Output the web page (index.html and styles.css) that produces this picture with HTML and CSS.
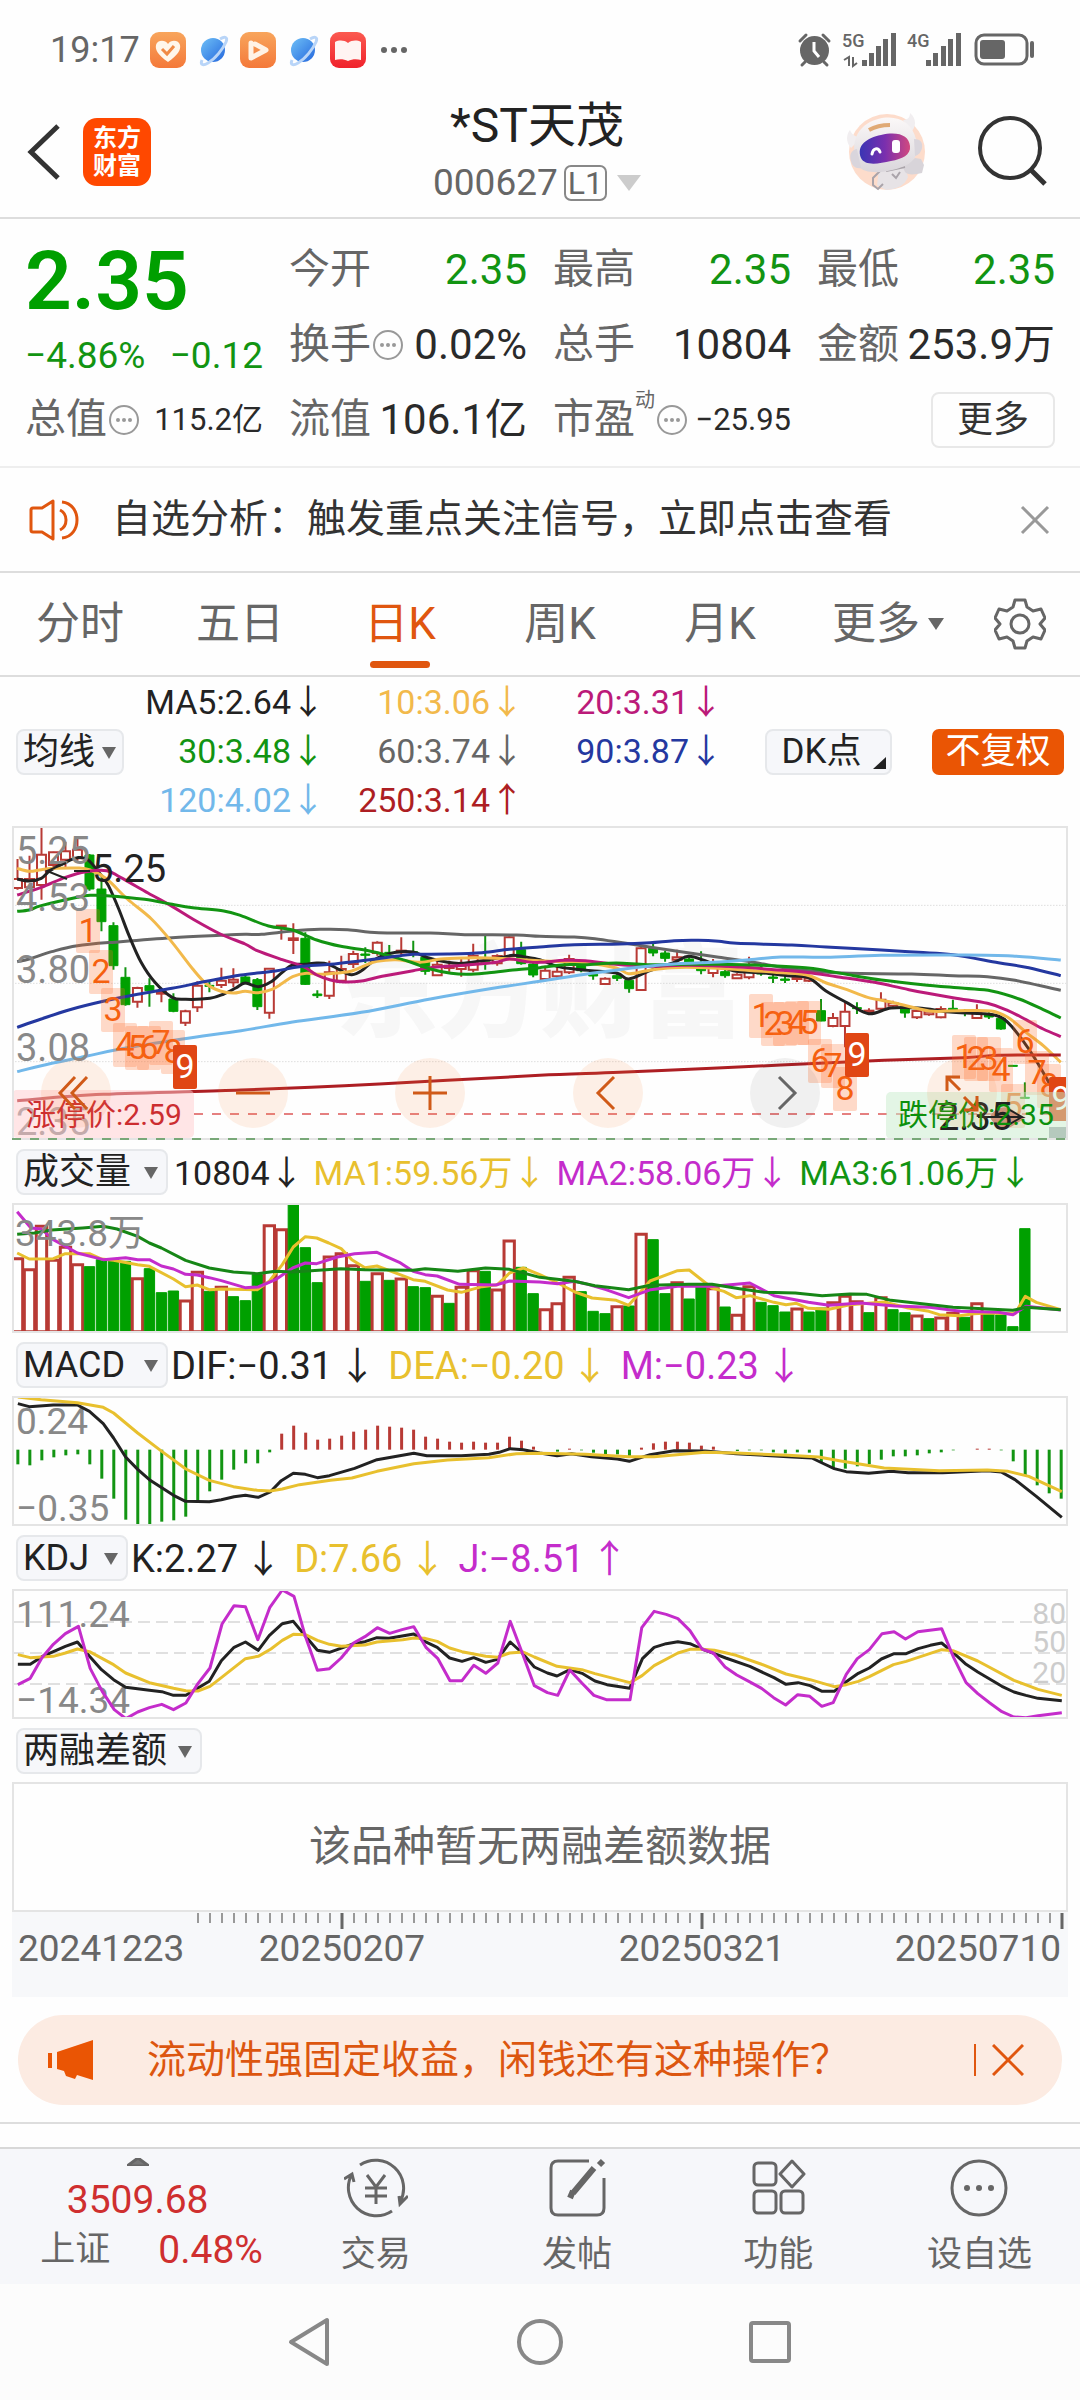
FILE: index.html
```html
<!DOCTYPE html>
<html lang="zh-CN">
<head>
<meta charset="utf-8">
<meta name="viewport" content="width=device-width, initial-scale=1">
<title>*ST天茂 000627</title>
<link rel="stylesheet" href="styles.css">
</head>
<body>
<div class="status">
  <span class="status-time">19:17</span>
  <svg class="status-apps" width="260" height="36" viewBox="0 0 260 36" aria-hidden="true">
    <defs>
      <linearGradient id="orange" x1="0" y1="0" x2="0" y2="1"><stop offset="0" stop-color="#f8a55c"/><stop offset="1" stop-color="#f4793a"/></linearGradient>
      <linearGradient id="blue" x1="0" y1="0" x2="1" y2="1"><stop offset="0" stop-color="#6fc0f7"/><stop offset="1" stop-color="#2467dd"/></linearGradient>
      <linearGradient id="red" x1="0" y1="0" x2="0" y2="1"><stop offset="0" stop-color="#fb5a50"/><stop offset="1" stop-color="#f0222c"/></linearGradient>
      <g id="planet"><circle cx="13" cy="18" r="12" fill="url(#blue)"/><path d="M20 7c5-3 8-2 6 3-3 7-11 17-18 21-5 3-8 2-6-3" fill="none" stroke="#b9d5f8" stroke-width="3"/></g>
    </defs>
    <rect width="36" height="36" rx="9" fill="url(#orange)"/>
    <path d="M18 30C8 23 5 18 6 13c1-5 9-6 12-1 3-5 11-4 12 1 1 5-2 10-12 17z" fill="#fff6ea"/>
    <path d="M12 17l5 5 7-8" fill="none" stroke="#f08a45" stroke-width="3"/>
    <use href="#planet" x="50"/>
    <rect x="90" width="36" height="36" rx="9" fill="url(#orange)"/>
    <path d="M101 11v15l15-8-11-6" fill="none" stroke="#fff3e6" stroke-width="5" stroke-linejoin="round" stroke-linecap="round"/>
    <use href="#planet" x="140"/>
    <rect x="180" width="36" height="36" rx="9" fill="url(#red)"/>
    <path d="M185 10c4-2 9-2 13 1 4-3 9-3 13-1v18c-4-1-9-1-13 1-4-2-9-2-13-1z" fill="#fff4f2"/>
    <g fill="#666"><circle cx="234" cy="18" r="3"/><circle cx="244" cy="18" r="3"/><circle cx="254" cy="18" r="3"/></g>
  </svg>
  <svg class="status-system" width="240" height="36" viewBox="0 0 240 36" aria-hidden="true">
    <g fill="none" stroke="#666" stroke-width="3" stroke-linecap="round"><path d="M2 9l6-6M25 3l6 6M7 30l-3 3M26 30l3 3"/></g>
    <circle cx="16.500" cy="18.500" r="14.500" fill="#666"/><path d="M16 10v9l5 6" fill="none" stroke="#fff" stroke-width="3"/>
    <text x="44" y="15" class="net">5G</text><text x="109" y="15" class="net">4G</text>
    <path d="M46 28l5-3v9M55 25v9l4-3" fill="none" stroke="#666" stroke-width="2"/>
    <g fill="#666">
      <path d="M64 28h5v6h-5zM71 21h5v13h-5zM78 14h5v20h-5zM85 7h5v27h-5zM93 1h5v33h-5z"/>
      <path d="M128 28h5v6h-5zM135 21h5v13h-5zM143 14h5v20h-5zM150 7h5v27h-5zM158 1h5v33h-5z"/>
      <rect x="182" y="8" width="25" height="19" rx="3"/><rect x="232" y="9" width="4" height="17" rx="2"/>
    </g>
    <rect x="178" y="3" width="51" height="29" rx="8" fill="none" stroke="#666" stroke-width="3"/>
  </svg>
</div>

<header class="header">
  <div class="header-side">
    <button class="icon-btn" aria-label="返回"><svg width="36" height="58" viewBox="0 0 36 58"><path d="M32 3L5 29l27 26" fill="none" stroke="#333" stroke-width="5"/></svg></button>
    <a class="logo" href="#home"><span>东方</span><span>财富</span></a>
  </div>
  <div class="header-title">
    <h1>*ST天茂</h1>
    <p>000627<span class="level">L1</span><svg width="24" height="16" viewBox="0 0 24 16" aria-hidden="true"><path d="M0 0h24L12 16z" fill="#ccc"/></svg></p>
  </div>
  <div class="header-side header-right">
    <button class="icon-btn" aria-label="智能助手">
      <svg width="80" height="80" viewBox="0 0 80 80">
        <defs>
          <linearGradient id="visor"><stop offset="0" stop-color="#3a35b4"/><stop offset=".5" stop-color="#7a2fae"/><stop offset="1" stop-color="#d2497f"/></linearGradient>
          <linearGradient id="shell" x1="0" y1="0" x2="0" y2="1"><stop offset="0" stop-color="#fbf8f8"/><stop offset="1" stop-color="#dad6db"/></linearGradient>
        </defs>
        <circle cx="41" cy="40" r="38" fill="#fddccb"/>
        <path d="M5 36C-2 28 2 20 4 18c2 5 6 7 11 8zM57 8c4 0 7-2 7-7 7 6 6 14 1 19z" fill="#f1eef0"/>
        <path d="M33 57l25-5 4 13c-3 8-10 12-22 13l-9-5z" fill="#e7e3e6"/>
        <path d="M56 53c8 0 9-5 13-7l6 1 3 6-2 8c-8 2-15 2-17-1z" fill="#d8d4d9"/>
        <path d="M35 58l-8 8v7l5 4 5-5M40 59l19-4M46 62l4 4 4-6" fill="none" stroke="#aaa4aa" stroke-width="2"/>
        <path d="M12 54C3 32 10 13 32 7c20-5 34 4 38 20 4 15-2 24-14 28-12 5-36 9-44-1z" fill="url(#shell)"/>
        <path d="M11 37c-6 1-8 6-6 12 1 5 5 8 10 7zM68 27c6 0 9 3 8 9-1 4-3 7-7 8z" fill="#d9d5dc"/>
        <path d="M23 18c7-4 13-5 21-5" fill="none" stroke="#e0aa76" stroke-width="4"/>
        <path d="M15 46c-5-13 6-20 20-23 18-4 28 1 29 11 1 9-8 13-19 15-13 3-26 5-30-3z" fill="url(#visor)"/>
        <path d="M26 42c1-6 6-7 8-2" fill="none" stroke="#fff" stroke-width="3" stroke-linecap="round"/>
        <rect x="46" y="28" width="8" height="13" rx="3" fill="#fff"/>
      </svg>
    </button>
    <button class="icon-btn" aria-label="搜索"><svg width="72" height="72" viewBox="0 0 72 72"><circle cx="34" cy="32" r="30" fill="none" stroke="#333" stroke-width="4"/><path d="M54 53l15 15" stroke="#333" stroke-width="5"/></svg></button>
  </div>
</header>

<section class="quote">
  <div class="quote-col">
    <div class="price">2.35</div>
    <div class="change"><span>−4.86%</span><span>−0.12</span></div>
    <div class="field"><span class="name">总值</span><svg class="more-dot"><use href="#dots"/></svg><span class="val small">115.2亿</span></div>
  </div>
  <div class="quote-col">
    <div class="field"><span class="name">今开</span><span class="val down">2.35</span></div>
    <div class="field"><span class="name">换手</span><svg class="more-dot"><use href="#dots"/></svg><span class="val">0.02%</span></div>
    <div class="field"><span class="name">流值</span><span class="val">106.1亿</span></div>
  </div>
  <div class="quote-col">
    <div class="field"><span class="name">最高</span><span class="val down">2.35</span></div>
    <div class="field"><span class="name">总手</span><span class="val">10804</span></div>
    <div class="field"><span class="name">市盈</span><span class="sup">动</span><svg class="more-dot"><use href="#dots"/></svg><span class="val small">−25.95</span></div>
  </div>
  <div class="quote-col">
    <div class="field"><span class="name">最低</span><span class="val down">2.35</span></div>
    <div class="field"><span class="name">金额</span><span class="val">253.9万</span></div>
    <div class="field"><button class="more-btn">更多</button></div>
  </div>
  <svg class="symbols" aria-hidden="true"><symbol id="dots" viewBox="0 0 30 30"><circle cx="15" cy="15" r="14" fill="none" stroke="#999" stroke-width="2"/><g fill="#999"><circle cx="9" cy="15" r="2"/><circle cx="15" cy="15" r="2"/><circle cx="21" cy="15" r="2"/></g></symbol></svg>
</section>

<section class="notice">
  <svg width="52" height="42" viewBox="0 0 52 42" aria-hidden="true"><g fill="none" stroke="#e0560f" stroke-width="3" stroke-linejoin="round"><path d="M2 11q0-2 2-2h9L24 2v38L13 33H4q-2 0-2-2z"/><path d="M31 11c8 4 8 16 0 20M33 3c20 2 20 34 0 36"/></g></svg>
  <a href="#signal">自选分析：触发重点关注信号，立即点击查看</a>
  <button class="icon-btn" aria-label="关闭"><svg width="30" height="30" viewBox="0 0 30 30"><path d="M2 2l26 26M28 2L2 28" stroke="#999" stroke-width="3"/></svg></button>
</section>

<nav class="tabs">
  <button>分时</button><button>五日</button><button class="active">日K</button><button>周K</button><button>月K</button>
  <button class="tab-more">更多<svg width="16" height="12" viewBox="0 0 16 12" aria-hidden="true"><path d="M0 0h16L8 12z" fill="#666"/></svg></button>
  <button aria-label="设置"><svg width="52" height="52" viewBox="0 0 52 52"><g fill="none" stroke="#666" stroke-width="3" stroke-linejoin="round"><path d="M21 2h10l2 7 6 4 8-2 4 9-5 6 5 6-4 9-8-2-6 4-2 7H21l-2-7-6-4-8 2-4-9 5-6-5-6 4-9 8 2 6-4z"/><circle cx="26" cy="26" r="9"/></g></svg></button>
</nav>

<section class="ma-bar">
  <label class="picker picker-ma"><select aria-label="均线"><option>均线</option></select><svg viewBox="0 0 14 12"><path d="M0 0h14L7 12z"/></svg></label>
  <div class="ma-values">
    <span class="c-ink">MA5:2.64<i>↓</i></span><span class="c-amber">10:3.06<i>↓</i></span><span class="c-magenta">20:3.31<i>↓</i></span>
    <span class="c-green">30:3.48<i>↓</i></span><span class="c-gray">60:3.74<i>↓</i></span><span class="c-blue">90:3.87<i>↓</i></span>
    <span class="c-sky">120:4.02<i>↓</i></span><span class="c-crimson">250:3.14<i>↑</i></span>
  </div>
  <button class="dk">DK点<svg width="13" height="12" viewBox="0 0 13 12" aria-hidden="true"><path d="M13 0v12H0z" fill="#222"/></svg></button>
  <button class="fq">不复权</button>
</section>

<main class="charts">
  <div class="kline">
    <svg class="chart" viewBox="0 0 1056 314">
      <text class="watermark" x="324" y="203">东方财富</text>
      <svg id="kline" width="1056" height="314" viewBox="35 21 3067 942" preserveAspectRatio="none">
        <path class="dotted" d="M36 259H3102M36 493H3102M36 728H3102"/>
      </svg>
      <path d="M182 288H1056" class="limit-up-line"/>
      <g id="signals"></g>
      <g class="axis-main"><text x="4" y="38">5.25</text><text x="4" y="85">4.53</text><text x="4" y="157">3.80</text><text x="4" y="235">3.08</text><text x="4" y="309">2.35</text></g>
      <path d="M978 291c4-10 18-14 26-4l8 6-10 6c-8 6-20 2-24-8z" fill="#d03a2a"/>
      <rect x="0" y="264" width="182" height="48" rx="5" class="limit-up-box"/><text x="14" y="299" class="limit-up">涨停价:2.59</text>
      <rect x="874" y="266" width="181" height="47" rx="5" class="limit-down-box"/>
      <g class="marker"><path d="M54 37L35 45l20 8M62 45h16M966 291h44l-14-8M1010 291l-14 8"/><text x="80" y="56">5.25</text><text x="926" y="304">2.35</text></g>
      <text x="886" y="299" class="limit-down">跌停价:2.35</text>
      <rect x="1037" y="301" width="18" height="12" fill="#b5c9bd"/>
      <rect class="frame" x="1" y="1" width="1054" height="312"/>
      <path d="M0 313H1056" class="limit-down-line"/>
    </svg>
    <div class="controls">
      <button aria-label="最前"><svg viewBox="0 0 70 70"><path d="M34 19L19 35l15 16M46 19L31 35l15 16"/></svg></button>
      <button aria-label="缩小"><svg viewBox="0 0 70 70"><path d="M18 35h34"/></svg></button>
      <button aria-label="放大"><svg viewBox="0 0 70 70"><path d="M18 35h34M35 18v34"/></svg></button>
      <button aria-label="向前"><svg viewBox="0 0 70 70"><path d="M41 19L25 35l16 16"/></svg></button>
      <button aria-label="向后" class="disabled"><svg viewBox="0 0 70 70"><path d="M29 19l16 16-16 16"/></svg></button>
      <button aria-label="全屏"><svg viewBox="0 0 70 70"><path d="M20 33V19h13M21 20l12 12M50 38v14H37M49 51L37 39"/></svg></button>
    </div>
  </div>

  <div class="ind ind-volume">
    <label class="picker"><select aria-label="成交量指标"><option>成交量</option></select><svg viewBox="0 0 14 12"><path d="M0 0h14L7 12z"/></svg></label>
    <span class="c-ink">10804<i>↓</i></span><span class="c-yellow">MA1:59.56万<i>↓</i></span><span class="c-purple">MA2:58.06万<i>↓</i></span><span class="c-green">MA3:61.06万<i>↓</i></span>
  </div>
  <svg class="chart" viewBox="0 0 1056 130">
    <svg id="volume" width="1056" height="130" viewBox="35 190 3067 390" preserveAspectRatio="none"></svg>
    <text class="axis" x="3" y="43">343.8万</text>
    <rect class="frame" x="1" y="1" width="1054" height="128"/>
  </svg>

  <div class="ind">
    <label class="picker"><select aria-label="MACD指标"><option>MACD</option></select><svg viewBox="0 0 14 12"><path d="M0 0h14L7 12z"/></svg></label>
    <span class="c-ink">DIF:−0.31<i>↓</i></span><span class="c-yellow">DEA:−0.20<i>↓</i></span><span class="c-purple">M:−0.23<i>↓</i></span>
  </div>
  <svg class="chart" viewBox="0 0 1056 130">
    <text class="axis" x="4" y="38">0.24</text><text class="axis" x="4" y="125">−0.35</text>
    <svg id="macd" width="1056" height="130" viewBox="35 769 3067 390" preserveAspectRatio="none"></svg>
    <rect class="frame" x="1" y="1" width="1054" height="128"/>
  </svg>

  <div class="ind">
    <label class="picker picker-short"><select aria-label="KDJ指标"><option>KDJ</option></select><svg viewBox="0 0 14 12"><path d="M0 0h14L7 12z"/></svg></label>
    <span class="c-ink">K:2.27<i>↓</i></span><span class="c-yellow">D:7.66<i>↓</i></span><span class="c-purple">J:−8.51<i>↑</i></span>
  </div>
  <svg class="chart" viewBox="0 0 1056 130">
    <path class="dashed" d="M0 33H1056M0 64H1056M0 95H1056"/>
    <text class="axis" x="4" y="38">111.24</text><text class="axis" x="4" y="124">−14.34</text>
    <g class="levels"><text x="1054" y="35">80</text><text x="1054" y="63">50</text><text x="1054" y="94">20</text></g>
    <svg id="kdj" width="1056" height="130" viewBox="35 178 3067 390" preserveAspectRatio="none"></svg>
    <rect class="frame" x="1" y="1" width="1054" height="128"/>
  </svg>

  <div class="ind">
    <label class="picker picker-long"><select aria-label="两融差额指标"><option>两融差额</option></select><svg viewBox="0 0 14 12"><path d="M0 0h14L7 12z"/></svg></label>
  </div>
  <div class="empty">该品种暂无两融差额数据</div>
  <svg class="chart dates" viewBox="0 0 1056 85">
    <path id="ticks" stroke="#999" stroke-width="2"/>
    <path d="M330 1v16M690 1v16M1050 1v16" stroke="#666" stroke-width="3"/>
    <text x="6" y="49">20241223</text><text x="330" y="49" text-anchor="middle">20250207</text><text x="690" y="49" text-anchor="middle">20250321</text><text x="1049" y="49" text-anchor="end">20250710</text>
  </svg>
</main>

<aside class="promo">
  <svg width="46" height="42" viewBox="0 0 46 42" aria-hidden="true"><path d="M0 14h4v15H0zM9 13L45 1v40l-16-5-2 4-9-3-2-5-7-2z" fill="#ea5504"/></svg>
  <a href="#promo">流动性强固定收益，闲钱还有这种操作？</a>
  <button class="icon-btn" aria-label="关闭广告"><svg width="32" height="32" viewBox="0 0 32 32"><path d="M1 1l30 30M31 1L1 31" stroke="#e0560f" stroke-width="3"/></svg></button>
</aside>

<footer class="bottom">
  <a class="index" href="#index">
    <svg width="22" height="8" viewBox="0 0 22 8" aria-hidden="true"><path d="M11 0l11 8H0z" fill="#777"/></svg>
    <strong>3509.68</strong>
    <span><em>上证</em><b>0.48%</b></span>
  </a>
  <a href="#trade"><svg width="64" height="60" viewBox="0 0 64 60"><path d="M16 7a28 28 0 0 1 40 37M48 53A28 28 0 0 1 8 16M0 21l8-5 2 8M64 38l-8 8-1-8M23 17l9 12 9-12M21 30h22M21 38h22M32 29v17"/></svg>交易</a>
  <a href="#post"><svg width="60" height="60" viewBox="0 0 60 60"><path d="M42 3H11q-7 0-7 7v40q0 7 7 7h39q7 0 7-7V20"/><path d="M26 35l21-25M23 40l3-7" stroke-width="6"/><path d="M52 7l4-4" stroke-width="6"/></svg>发帖</a>
  <a href="#tools"><svg width="56" height="60" viewBox="0 0 56 60"><rect x="4" y="5" width="22" height="22" rx="4"/><rect x="4" y="33" width="22" height="22" rx="4"/><rect x="31" y="33" width="22" height="22" rx="4"/><path d="M42 3l12 13-12 13-12-13z" stroke-linejoin="round"/></svg>功能</a>
  <a href="#watch"><svg width="60" height="60" viewBox="0 0 60 60"><circle cx="30" cy="30" r="27"/><g fill="#666" stroke="none"><circle cx="18" cy="30" r="3"/><circle cx="30" cy="30" r="3"/><circle cx="42" cy="30" r="3"/></g></svg>设自选</a>
</footer>

<div class="system-nav">
  <button class="icon-btn" aria-label="后退"><svg width="50" height="50" viewBox="0 0 50 50"><path d="M42 3v44L6 25z" stroke-linejoin="round"/></svg></button>
  <button class="icon-btn" aria-label="主屏幕"><svg width="50" height="50" viewBox="0 0 50 50"><circle cx="25" cy="25" r="21"/></svg></button>
  <button class="icon-btn" aria-label="最近任务"><svg width="50" height="50" viewBox="0 0 50 50"><rect x="6" y="6" width="38" height="38" rx="2"/></svg></button>
</div>
<script src="charts.js"></script>
</body>
</html>
```
FILE: styles.css
```css
* { box-sizing: border-box; }
body { margin: 0; background: #fefefe; color: #222; font-family: Roboto, "Liberation Sans", "Noto Sans CJK SC", sans-serif; font-size: 36px; line-height: 1; }
button { border: 0; padding: 0; margin: 0; background: none; font: inherit; color: inherit; }
a { color: inherit; text-decoration: none; }
i, em { font-style: normal; }
i { font-family: "Noto Sans CJK SC", sans-serif; line-height: 1; }
svg { display: block; flex: none; }
.icon-btn { display: flex; }
.symbols { position: absolute; width: 0; height: 0; }

.status { display: flex; align-items: center; height: 98px; padding: 2px 42px 0 50px; color: #666; }
.status-time { font-size: 36px; }
.status-apps { margin-left: 10px; }
.status-system { margin-left: auto; overflow: visible; }
.net { font-size: 18px; font-weight: 500; fill: #666; }

.header { display: flex; align-items: center; height: 121px; padding: 0 32px 0 26px; border-bottom: 2px solid #ddd; }
.header-side { display: flex; align-items: center; gap: 21px; flex: 1; padding-bottom: 12px; }
.header-right { justify-content: flex-end; gap: 50px; }
.logo { display: flex; flex-direction: column; align-items: center; justify-content: center; width: 68px; height: 68px; border-radius: 14px; background: #ff4800; color: #fff; font-size: 24px; font-weight: 700; line-height: 28px; }
.header-title { padding-bottom: 8px; text-align: center; }
.header-title h1 { margin: 0; font-size: 48px; font-weight: 400; line-height: 58px; }
.header-title p { display: flex; align-items: center; margin: 0; gap: 6px; color: #666; font-size: 37px; line-height: 56px; }
.header-title svg { margin-left: 4px; }
.level { border: 2px solid #888; border-radius: 7px; padding: 0 2px; font-size: 32px; line-height: 32px; }

.quote { display: flex; gap: 26px; padding: 13px 25px 9px; border-bottom: 2px solid #eee; }
.quote-col { flex: 1; min-width: 0; }
.price { height: 98px; font-size: 82px; font-weight: 600; line-height: 98px; color: #009f00; }
.change { display: flex; justify-content: space-between; height: 52px; font-size: 37px; line-height: 52px; color: #129412; }
.field { display: flex; align-items: center; height: 75px; white-space: nowrap; }
.name { font-size: 41px; color: #666; }
.more-dot { width: 30px; height: 30px; margin-left: 2px; }
.val { margin-left: auto; font-size: 42px; color: #2a2a2a; }
.small { font-size: 31px; }
.down { color: #129412; }
.sup { align-self: flex-start; margin-top: 8px; font-size: 20px; color: #666; }
.more-btn { margin-left: auto; width: 124px; height: 56px; border: 2px solid #e8e8e8; border-radius: 8px; color: #333; }

.notice { display: flex; align-items: center; height: 105px; padding: 0 30px 0 29px; border-bottom: 2px solid #ddd; font-size: 39px; color: #333; }
.notice a { flex: 1; margin-left: 31px; white-space: nowrap; }

.tabs { display: grid; grid-template-columns: repeat(6, 4fr) 3fr; height: 104px; border-bottom: 2px solid #ddd; font-size: 44px; color: #666; }
.tabs button { position: relative; display: flex; align-items: center; justify-content: center; gap: 8px; }
.tabs .tab-more { padding-left: 16px; }
.tabs .active { color: #e0560f; }
.tabs .active::after { content: ""; position: absolute; left: calc(50% - 30px); bottom: 7px; width: 60px; height: 7px; border-radius: 4px; background: #e0560f; }

.ma-bar { display: flex; align-items: center; height: 149px; padding: 0 16px; }
.picker { position: relative; flex: none; width: 152px; }
.picker select { appearance: none; display: block; width: 100%; height: 46px; margin: 0; padding: 0 0 0 5px; border: 2px solid #e6e8eb; border-radius: 8px; background: #f6f7fa; font: inherit; font-size: 36px; line-height: 42px; color: #222; }
.picker svg { position: absolute; right: 10px; top: 18px; width: 14px; height: 12px; fill: #666; pointer-events: none; }
.picker-short { width: 112px; }
.picker-long { width: 186px; }
.picker-ma { width: 108px; }
.picker-ma svg { right: 8px; }
.ma-values { display: grid; grid-template-columns: 201px 199px 199px; line-height: 49px; font-size: 34px; text-align: right; }
.dk { position: relative; width: 127px; height: 46px; margin-left: auto; border: 2px solid #e6e8eb; border-radius: 8px; background: #f6f7fa; padding-right: 14px; font-size: 35px; line-height: 40px; }
.dk svg { position: absolute; right: 4px; bottom: 4px; }
.fq { width: 132px; height: 46px; margin-left: 40px; border-radius: 7px; background: #ea5504; color: #fff; font-size: 35px; line-height: 44px; }

.c-ink { color: #222; } .c-amber { color: #f2b94b; } .c-magenta { color: #bb1a79; } .c-green { color: #129412; }
.c-gray { color: #666; } .c-blue { color: #2438a0; } .c-sky { color: #72b8ea; } .c-crimson { color: #ad1e23; }
.c-yellow { color: #e8c02e; } .c-purple { color: #c42ccb; }

.charts { padding: 0 12px; }
.chart { width: 100%; height: auto; }
.kline { position: relative; }
.controls { position: absolute; left: 29px; right: 71px; bottom: 12px; display: flex; justify-content: space-between; }
.controls button { width: 70px; height: 70px; border-radius: 50%; background: rgba(250, 130, 60, .12); }
.controls path { fill: none; stroke: #d05a18; stroke-width: 3; }
.controls .disabled { background: rgba(60, 60, 60, .07); }
.controls .disabled path { stroke: #666; }

.ind { display: flex; align-items: center; gap: 12px; height: 63px; padding-left: 4px; font-size: 38px; white-space: nowrap; }
.ind .picker { margin-right: -9px; }
.ind i { margin-left: 6px; }
.ind-volume { gap: 10px; font-size: 34px; }
.ind-volume .picker { margin-right: -4px; }
.ind-volume i { margin-left: 0; }

.frame { fill: none; stroke: #e4e4e4; stroke-width: 2; }
.chart path, .chart rect { vector-effect: non-scaling-stroke; }
.watermark { font-size: 102px; font-weight: 900; fill: #f7f7f7; }
.dotted { stroke: #ccc; stroke-width: 1; stroke-dasharray: 1 2; }
.dashed { stroke: #e0e0e0; stroke-width: 2; stroke-dasharray: 12 6; }
.axis-main text { font-size: 38px; fill: #888; }
.axis { font-size: 37px; fill: #888; }
.levels text { font-size: 30px; fill: #ccc; text-anchor: end; }
.marker text { font-size: 38px; fill: #222; }
.marker path { fill: none; stroke: #222; stroke-width: 2; }
.limit-up-line { stroke: #e58080; stroke-width: 2; stroke-dasharray: 9 9; }
.limit-down-line { stroke: #78a878; stroke-width: 2; stroke-dasharray: 9 9; }
.limit-up-box { fill: #ffcccd; fill-opacity: .5; }
.limit-down-box { fill: #c8eccb; fill-opacity: .5; }
.limit-up { font-size: 30px; fill: #cc2d30; }
.limit-down { font-size: 30px; fill: #0c900c; }
.line { fill: none; stroke-width: 3; stroke-linejoin: round; }
.up { fill: #fff; stroke: #b83a35; stroke-width: 2; }
.fall { fill: #00a000; stroke: #00a000; stroke-width: 1; }
.up-line { stroke: #b83a35; stroke-width: 2; }
.fall-line { stroke: #129412; stroke-width: 2; }
.bar-line { stroke-width: 3; }
.volume-up { stroke-width: 3; }
.signal { fill: #ff6a28; fill-opacity: .25; }
.signal-last { fill: #e04614; }
.signal-text { font-size: 34px; fill: #f5600f; text-anchor: middle; }
.signal-text-last { fill: #fff; }

.empty { display: flex; align-items: center; justify-content: center; height: 130px; border: 2px solid #e4e4e4; font-size: 42px; color: #666; }
.dates { background: #f7f8fa; }
.dates text { font-size: 37px; fill: #666; }

.promo { display: flex; align-items: center; height: 90px; margin: 18px 18px 17px; padding: 0 38px 0 30px; border-radius: 45px; background: #fcebe2; color: #dc560f; font-size: 39px; }
.promo a { flex: 1; margin-left: 53px; white-space: nowrap; }
.promo button { padding-left: 16px; border-left: 2px solid #e0560f; }

.bottom { display: grid; grid-template-columns: 275fr repeat(4, 201fr); height: 162px; margin-top: 17px; border-top: 2px solid #ddd; background: linear-gradient(#fefefe 23px, #d8d8d8 23px, #d8d8d8 25px, #f6f7fa 25px); color: #666; }
.bottom a { display: flex; flex-direction: column; align-items: center; gap: 17px; padding-top: 34px; font-size: 35px; line-height: 40px; }
.bottom a > svg { fill: none; stroke: #666; stroke-width: 3; }
.bottom .index { gap: 10px; }
.index strong { font-size: 39px; font-weight: 400; color: #cf2f2f; margin-top: 4px; }
.index span { display: flex; gap: 48px; padding-left: 28px; }
.index b { font-size: 39px; font-weight: 400; color: #cf2f2f; }

.system-nav { display: flex; justify-content: center; gap: 180px; padding: 33px 0 36px; background: #fcfcfc; }
.system-nav svg { fill: none; stroke: #888; stroke-width: 4; }
```
FILE: charts.js
```js
const NS = 'http://www.w3.org/2000/svg';
const FIRST = 51, STEP = 34.83;
const xOf = i => FIRST + STEP * i;

function add(parent, name, attrs, text) {
  const el = document.createElementNS(NS, name);
  for (const key in attrs) el.setAttribute(key, attrs[key]);
  if (text) el.textContent = text;
  parent.appendChild(el);
}

const parse = s => s.split(' ').map(p => p.split(',').map(Number));

// Catmull-Rom curve through the points
function curve(points) {
  let d = 'M' + points[0];
  for (let i = 0; i < points.length - 1; i++) {
    const a = points[i - 1] || points[i], b = points[i], c = points[i + 1], e = points[i + 2] || c;
    d += `C${b[0] + (c[0] - a[0]) / 6} ${b[1] + (c[1] - a[1]) / 6} ${c[0] - (e[0] - b[0]) / 6} ${c[1] - (e[1] - b[1]) / 6} ${c[0]} ${c[1]}`;
  }
  return d;
}
const line = (svg, color, data, smooth) =>
  add(svg, 'path', { class: 'line', stroke: color, d: smooth ? curve(parse(data)) : 'M' + data });

// Candles: direction, high, body top, body bottom, low
const candles = `r120,180,207,212 r110,180,205,210 r25,107,198,242 r98,100,138,150 r68,97,122,150 r60,92,118,125 g105,108,210,215 g175,210,308,337 g310,320,440,452 g445,475,557,560 r503,507,548,566 g478,500,515,563 r510,518,524,550 g523,540,577,580 r572,577,611,621 r487,500,565,579 g485,499,502,520 r446,485,498,507 r448,482,490,505 g465,474,492,496 g477,482,563,573 r447,449,581,599 r320,320,323,362 r313,358,363,405 g340,358,496,498 g514,525,530,537 r425,460,530,540 r410,450,485,492 r395,405,435,447 g385,405,409,432 r367,371,402,410 g378,400,404,410 r355,395,400,412 g365,398,402,415 g408,415,457,467 r425,437,469,470 r425,440,447,458 r420,440,450,473 r374,410,452,460 g350,425,430,452 r406,411,433,440 r352,355,412,415 g368,392,434,437 g425,435,468,475 r440,455,480,487 r440,458,472,478 r407,420,460,465 g425,435,455,460 g455,466,471,482 r475,479,495,497 g460,470,478,486 g478,484,509,521 r385,388,513,516 g366,388,402,412 g395,402,418,428 r392,415,422,430 g410,420,435,445 g397,448,455,466 r420,447,462,475 g448,458,470,476 r463,467,478,480 r413,455,475,481 g440,460,465,470 g452,474,478,492 g452,480,484,492 r465,475,480,489 r467,478,485,489 g540,575,606,607 r582,597,621,625 r550,578,621,685 g550,566,569,585 r568,575,580,588 r520,542,569,572 r545,552,560,565 g562,567,582,596 r570,576,595,600 r570,578,586,590 r562,570,595,598 g542,568,573,580 g570,578,582,592 r556,582,597,600 g580,588,594,600 g590,598,630,632 g738,739,742,742 g790,835,838,838`.split(' ');
const kline = document.getElementById('kline');
candles.forEach((c, i) => {
  const up = c[0] === 'r', [high, top, bottom, low] = c.slice(1).split(',').map(Number), x = xOf(i);
  add(kline, 'path', { class: up ? 'up-line' : 'fall-line', d: `M${x} ${high}V${top}M${x} ${bottom}V${low}` });
  add(kline, 'rect', { class: up ? 'up' : 'fall', x: x - 13, y: top, width: 26, height: bottom - top });
});

line(kline, '#666', '50,428 85,420 150,398 225,380 350,368 500,356 640,349 712,346 760,346 850,336 930,331 1010,332 1100,341 1250,342 1350,347 1500,348 1568,352 1668,354 1728,359 1818,373 1968,397 2088,415 2188,430 2288,448 2388,459 2468,463 2648,465 2768,470 2868,473 2948,484 3081,514', true);
line(kline, '#222', '50,180 85,186 120,178 145,155 190,130 225,116 255,122 295,170 315,200 345,270 375,350 410,430 450,490 500,535 540,541 610,538 650,525 685,507 712,492 750,503 785,490 820,460 850,438 885,436 920,432 955,436 1000,460 1022,467 1050,455 1095,418 1150,400 1200,399 1240,415 1300,430 1340,433 1400,425 1460,415 1490,409 1520,413 1568,422 1618,442 1668,450 1718,455 1793,463 1826,480 1888,455 1958,430 2000,412 2048,425 2088,441 2138,457 2208,461 2288,470 2348,476 2398,515 2458,550 2523,584 2588,567 2668,567 2768,580 2868,585 2908,595 2938,622 2988,690 3038,775 3081,860', true);
line(kline, '#f2b94b', '50,148 85,157 120,152 160,148 225,147 262,153 310,180 370,240 440,300 500,370 560,450 600,495 640,516 678,522 712,517 750,521 790,511 820,493 850,473 890,463 930,466 980,462 1022,456 1060,440 1095,427 1150,422 1220,430 1280,420 1350,417 1420,417 1480,420 1568,425 1700,432 1790,447 1826,464 1880,455 1950,446 2050,446 2150,452 2250,460 2340,467 2400,492 2460,512 2520,535 2600,552 2700,576 2780,575 2880,576 2930,597 2980,640 3030,680 3081,730', true);
line(kline, '#bb1a79', '50,228 120,205 190,175 250,158 310,155 350,175 430,222 500,262 560,300 640,345 712,375 747,395 820,422 880,442 920,468 960,483 1000,489 1050,486 1110,472 1200,455 1260,445 1330,440 1400,434 1440,430 1480,420 1530,428 1568,430 1640,424 1700,425 1780,435 1880,442 1980,439 2068,440 2160,445 2248,452 2340,460 2430,473 2540,490 2640,512 2768,536 2868,553 2928,575 2980,602 3030,630 3081,653', true);
line(kline, '#129412', '50,277 85,273 120,260 225,235 262,229 310,230 420,241 500,256 560,266 650,276 700,290 780,321 850,333 920,363 990,382 1070,395 1130,410 1200,432 1250,450 1310,463 1360,466 1420,461 1500,452 1568,446 1640,437 1700,437 1790,432 1880,437 2000,436 2088,436 2240,440 2340,446 2400,455 2480,470 2560,483 2680,497 2800,508 2880,516 2960,540 3030,572 3081,597', true);
line(kline, '#2438a0', '50,625 120,600 200,573 300,547 400,526 500,508 600,487 700,468 800,456 870,443 960,436 1050,425 1150,412 1200,406 1300,405 1400,401 1480,391 1568,384 1668,377 1800,375 1888,371 1958,365 2028,364 2088,367 2140,373 2300,378 2400,384 2560,393 2668,400 2768,407 2900,431 2988,446 3081,470', true);
line(kline, '#72b8ea', '50,758 120,740 250,712 350,690 530,660 700,635 850,609 1050,580 1250,540 1450,505 1568,487 1718,463 1868,443 1968,434 2068,430 2168,423 2268,414 2400,415 2560,409 2800,408 2940,411 3081,423', true);
line(kline, '#ad1e23', '50,845 300,826 700,813 1000,800 1300,784 1568,769 1800,760 2068,748 2268,738 2568,724 2800,716 2900,709 3081,708', true);

// Nine-turn signals: left edge and top edge of each numbered box
const signals = ['222,270 258,393 293,508 328,613 363,622 398,620 433,606 467,632 502,678',
  '2175,525 2210,548 2245,548 2280,546 2315,546 2348,661 2384,674 2419,744 2454,643',
  '2766,648 2801,655 2837,655 2872,688 2907,795 2942,602 2977,695 3012,735 3047,775'];
const signalLayer = document.getElementById('signals');
signals.forEach(run => parse(run).forEach(([ux, uy], n) => {
  const x = Math.round((ux - 35) / 2.904), y = Math.round((uy - 21) / 3), last = n === 8;
  add(signalLayer, 'rect', { class: last ? 'signal-last' : 'signal', x, y, width: 24, height: 44, rx: 2 });
  add(signalLayer, 'text', { class: last ? 'signal-text signal-text-last' : 'signal-text', x: x + 12, y: y + 33 }, String(n + 1));
}));

const volume = document.getElementById('volume');
'r357 r390 r260 r362 r323 r375 g381 g360 g360 g365 r417 g387 g459 g454 r484 r398 g455 r443 g471 g483 g405 r258 r270 g192 g324 g429 r352 r342 r378 g425 r402 g422 r418 g441 g444 r470 g491 r443 r393 g395 r451 r304 g383 g462 r510 r492 r413 g456 g515 g522 r501 g499 r284 g300 g462 r429 g478 g437 r447 g502 r527 r441 g488 g498 g517 r508 g517 g505 r489 r470 r486 g519 r474 g510 g519 r529 g537 r535 r521 g533 r492 g523 g526 g561 g267'.split(' ').forEach((b, i) => {
  const top = Number(b.slice(1)), up = b[0] === 'r', x = xOf(i) - 15;
  add(volume, 'rect', { class: up ? 'up volume-up' : 'fall', x: x, y: top, width: 30, height: 576 - top });
});
line(volume, '#e8c02e', '50,340 85,358 155,357 190,342 260,342 295,358 330,362 400,375 434,380 504,418 539,441 573,436 608,450 643,448 747,450 782,425 820,375 852,322 887,291 920,295 955,310 991,327 1022,360 1060,384 1095,379 1160,404 1200,420 1235,425 1300,451 1340,458 1400,441 1445,435 1480,400 1520,385 1568,405 1620,430 1670,457 1720,475 1790,482 1826,497 1888,424 1968,393 2002,391 2068,445 2103,455 2138,474 2178,468 2248,488 2283,495 2313,491 2348,506 2408,509 2468,495 2568,487 2638,505 2698,515 2728,525 2788,528 2828,522 2868,520 2948,522 2978,470 3010,488 3081,510');
line(volume, '#c42ccb', '50,216 90,265 120,268 155,300 225,340 300,360 365,354 400,360 434,360 469,379 504,388 539,404 573,406 608,414 643,423 712,444 750,442 800,420 850,385 887,370 920,372 980,352 1030,342 1095,338 1160,368 1200,395 1235,405 1270,409 1335,434 1440,436 1480,424 1568,427 1620,432 1670,425 1700,432 1760,450 1826,474 1890,450 1968,440 2068,440 2138,434 2178,430 2248,468 2348,488 2408,497 2500,490 2600,499 2700,503 2790,515 2900,518 2942,525 2980,500 3081,511');
line(volume, '#168616', '50,284 100,280 150,271 240,265 300,260 340,268 400,290 434,310 469,325 539,362 608,385 678,397 747,402 800,395 850,397 990,387 1060,390 1200,392 1235,387 1330,395 1410,385 1480,389 1568,413 1668,425 1728,438 1826,450 1888,437 2000,434 2068,434 2148,447 2220,458 2310,460 2388,468 2468,463 2518,464 2588,482 2768,503 2942,512 2980,503 3081,510');

const macd = document.getElementById('macd');
const ZERO = 930;
[974, 977, 962, 953, 947, 944, 974, 1017, 1077, 1140, 1155, 1158, 1146, 1142, 1131, 1088, 1055, 1020, 990, 971, 971, 938, 882, 858, 879, 900, 897, 888, 876, 870, 858, 861, 864, 870, 891, 897, 906, 909, 906, 909, 909, 891, 903, 921, 930, 936, 927, 932, 939, 944, 944, 953, 924, 911, 906, 906, 909, 918, 921, 930, 934, 932, 932, 938, 941, 938, 939, 970, 985, 987, 980, 973, 960, 950, 950, 947, 941, 938, 932, 930, 927, 927, 932, 965, 1007, 1037, 1061, 1077].forEach((end, i) => {
  add(macd, 'path', { class: (end < ZERO ? 'up-line' : 'fall-line') + ' bar-line', d: `M${xOf(i) + 1} ${ZERO}V${end}` });
});
line(macd, '#222', '52,792 85,801 155,796 225,796 260,815 300,852 330,895 365,952 400,989 434,1020 504,1067 539,1085 608,1086 643,1080 680,1071 713,1067 750,1073 785,1057 817,1023 852,1001 887,1004 922,1014 957,1008 1030,986 1095,960 1202,941 1240,948 1340,948 1420,944 1450,938 1482,927 1520,930 1568,940 1618,948 1660,942 1718,951 1793,958 1828,965 1888,945 1958,933 2048,934 2138,942 2288,951 2358,955 2388,970 2423,987 2458,996 2523,1001 2588,995 2638,999 2738,999 2868,993 2908,997 2948,1020 3010,1070 3084,1133');
line(macd, '#e8c02e', '52,772 120,780 225,789 300,803 330,820 400,880 470,935 540,988 608,1022 678,1041 747,1052 785,1054 820,1048 870,1035 960,1022 1022,1015 1095,995 1202,972 1300,961 1420,954 1500,942 1568,941 1700,944 1826,951 1900,951 2048,938 2138,940 2288,947 2378,952 2438,963 2568,985 2728,993 2868,991 2928,995 2988,1010 3084,1056');

const kdj = document.getElementById('kdj');
line(kdj, '#222', '52,404 88,404 122,381 190,350 225,337 260,380 295,420 330,450 365,473 434,482 470,486 504,497 540,497 608,455 643,393 680,353 713,337 750,362 782,318 820,282 852,275 887,319 922,362 957,368 1022,344 1060,336 1095,324 1130,326 1202,313 1235,336 1270,353 1306,385 1342,395 1376,384 1411,398 1445,389 1482,337 1517,370 1552,412 1590,430 1618,439 1655,420 1693,432 1728,454 1763,465 1829,476 1866,387 1900,353 1935,342 1969,336 2004,342 2039,358 2075,372 2108,385 2178,410 2248,444 2283,464 2318,459 2353,468 2388,485 2423,485 2458,456 2493,431 2525,415 2560,388 2597,372 2632,372 2667,357 2702,347 2735,340 2768,368 2806,404 2840,427 2910,470 2945,487 2980,497 3015,506 3084,513');
line(kdj, '#e8c02e', '52,375 88,384 155,380 190,370 225,358 260,366 330,405 365,430 434,459 504,476 540,483 575,484 610,470 643,444 713,387 750,380 787,358 820,332 852,314 887,315 922,332 957,344 991,350 1060,346 1095,337 1170,330 1202,325 1235,326 1270,335 1306,355 1342,366 1411,380 1445,383 1480,370 1520,367 1552,382 1618,410 1690,420 1728,432 1830,459 1865,438 1900,408 1969,370 2004,359 2039,359 2075,362 2138,377 2210,403 2283,433 2353,450 2423,471 2458,465 2493,455 2525,441 2595,405 2632,395 2735,360 2768,363 2840,394 2945,452 3015,479 3084,497');
line(kdj, '#c42ccb', '52,465 88,446 122,384 155,344 190,312 228,290 262,416 297,485 332,540 366,567 400,547 434,534 470,524 504,540 540,520 575,462 610,415 645,283 680,228 713,231 749,330 784,233 820,181 854,200 887,320 922,422 957,417 991,385 1027,340 1060,321 1096,294 1132,311 1168,300 1202,291 1238,354 1272,387 1307,453 1342,453 1376,407 1411,431 1446,400 1482,275 1517,370 1552,468 1590,489 1620,497 1655,421 1690,460 1725,497 1761,510 1830,510 1864,294 1900,245 1935,254 1969,267 2004,303 2039,358 2072,370 2106,412 2140,436 2175,455 2212,476 2247,504 2282,526 2317,495 2352,500 2387,530 2420,519 2458,434 2490,387 2525,360 2562,312 2597,306 2630,328 2666,306 2735,297 2770,384 2806,459 2840,492 2875,520 2910,546 2945,562 2980,564 3015,558 3084,549');

let ticks = '';
for (let x = 186; x <= 1050; x += 12) ticks += `M${x} 1v10`;
document.getElementById('ticks').setAttribute('d', ticks);
```
